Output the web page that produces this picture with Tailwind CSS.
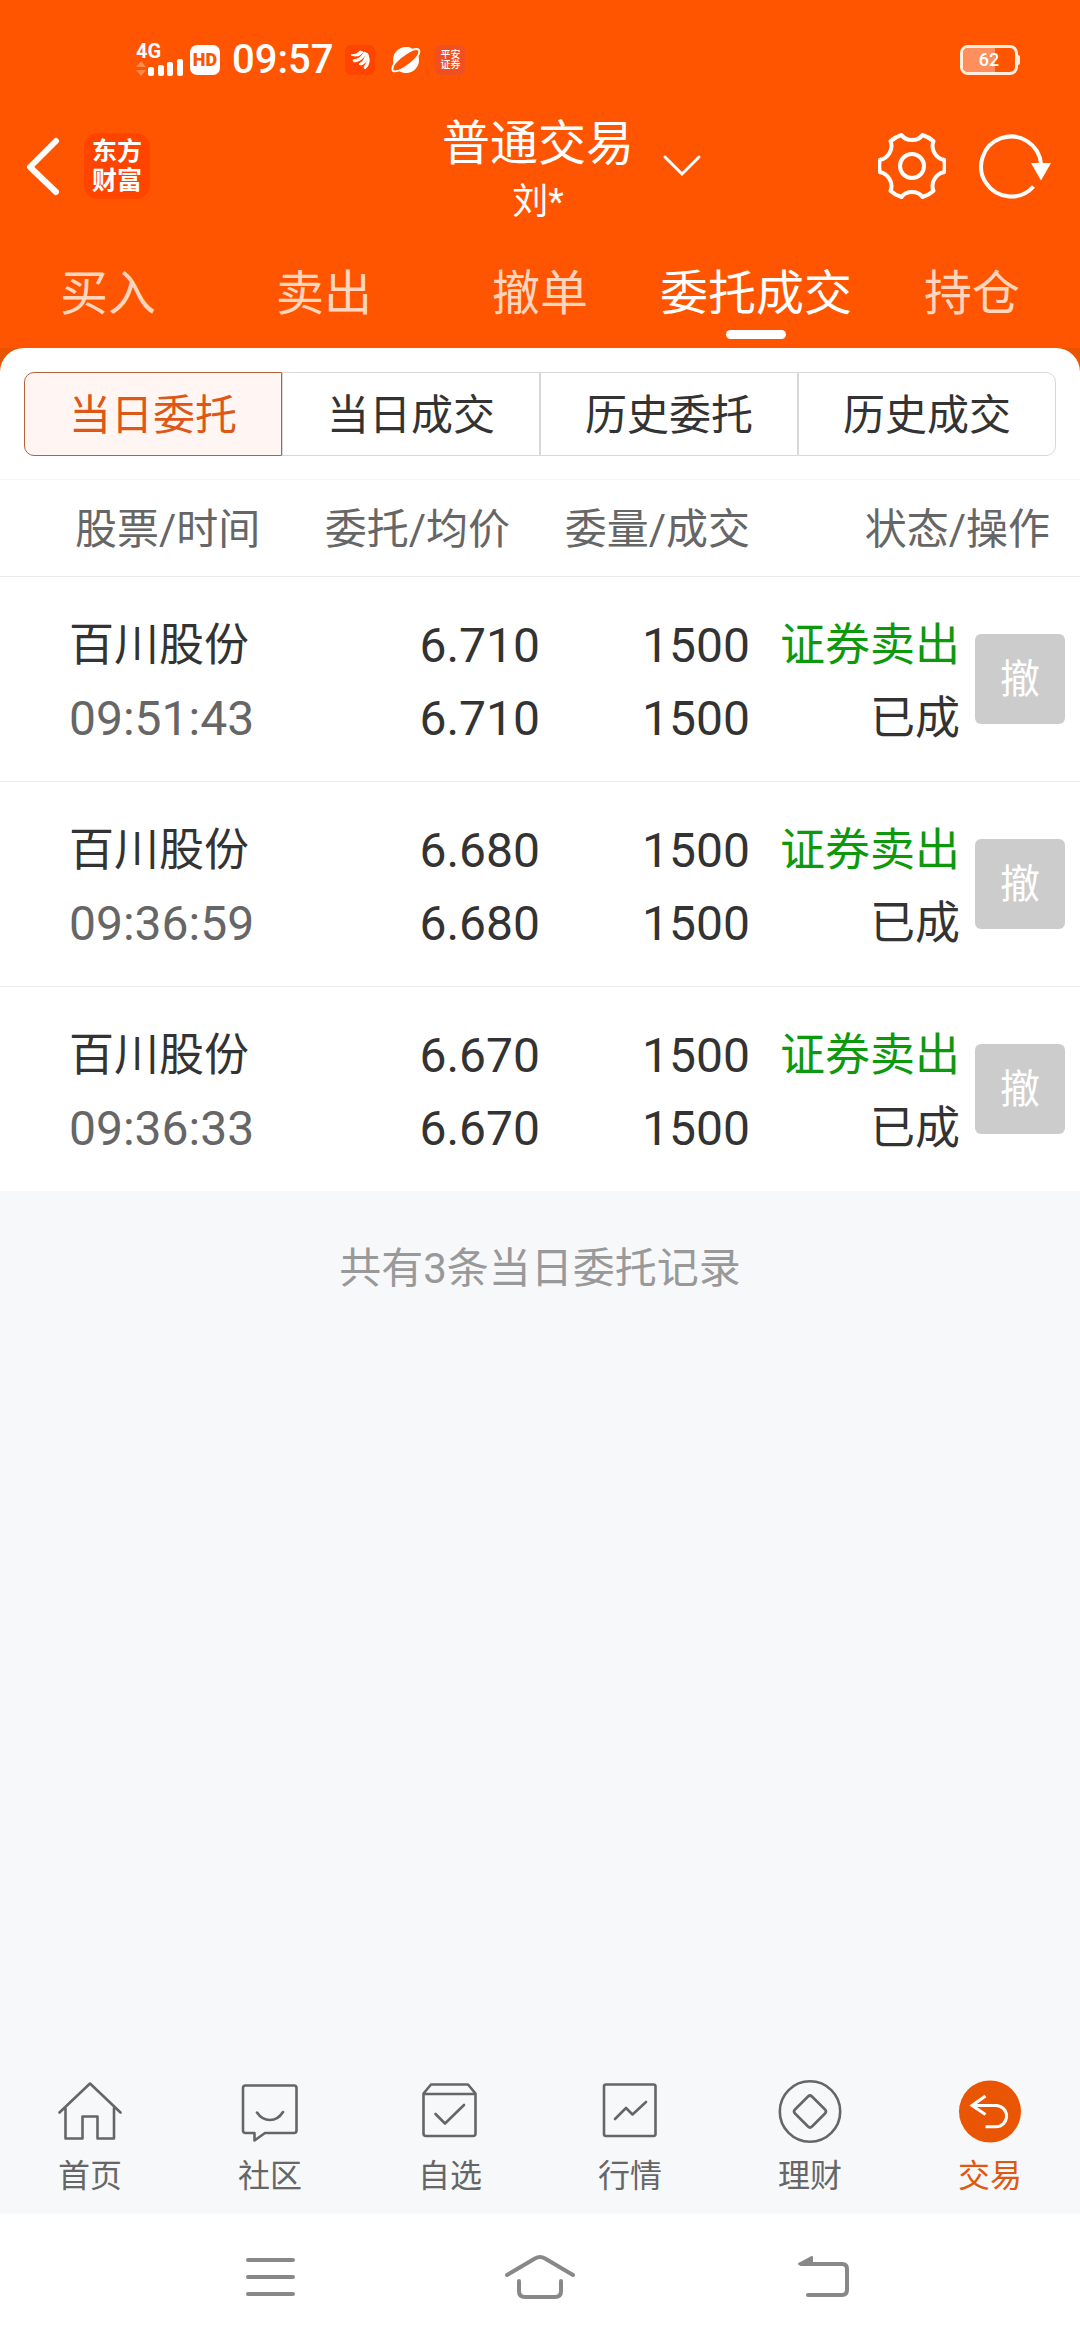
<!DOCTYPE html>
<html lang="zh-CN">
<head>
  <meta charset="UTF-8">
  <meta name="viewport" content="width=device-width, initial-scale=1.0">
  <title>普通交易</title>
  <script src="https://cdn.jsdelivr.net/npm/@tailwindcss/browser@4"></script>
</head>
<body class="min-h-screen flex flex-col bg-[#f7f8fa] text-[#333] font-[Roboto,'Noto_Sans_CJK_SC',sans-serif]">

  <header class="bg-[#ff5500] text-white">
    <!-- status bar -->
    <div class="h-[104px] pt-4 pl-[136px] pr-[60px] flex items-center justify-between">
      <div class="flex items-center">
        <div class="w-[47px] mr-[7px]">
          <p class="text-[20px] leading-[15px] font-bold">4G</p>
          <svg width="47" height="18" viewBox="0 0 47 18" fill="#fff">
            <path d="M0 8L5 2L10 8ZM0 11H10L5 17Z" fill="#ff8a4d" />
            <rect x="12" y="8" width="6" height="9" rx="2" />
            <rect x="22" y="6" width="6" height="11" rx="2" />
            <rect x="31" y="3" width="6" height="14" rx="2" />
            <rect x="41" y="0" width="6" height="17" rx="2" />
          </svg>
        </div>
        <span class="w-[30px] h-[30px] rounded-[7px] bg-white text-[#ff5500] text-[18px] leading-[30px] font-black text-center">HD</span>
        <span class="ml-3 text-[40px] leading-[40px] font-medium">09:57</span>
        <svg class="ml-3" width="30" height="30" viewBox="0 0 30 30">
          <rect width="30" height="30" rx="6" fill="#ff4400" />
          <path d="M6 10Q12 10 15 6L18 7Q14 13 6 10ZM8 15Q16 14 19 7L21 8Q18 16 9 17ZM14 19Q20 16 21 8L23 9Q23 18 16 20ZM19 22Q23 18 23 10L24 13Q25 20 20 24Z" fill="#fff" stroke="#fff" />
        </svg>
        <svg class="ml-4" width="30" height="30" viewBox="0 0 30 30">
          <circle cx="15" cy="15" r="13" fill="#fff" />
          <path d="M2 26Q-1 21 10 12Q24 1 28 5Q30 10 19 19Q7 28 2 26Z" fill="#ff5500" stroke="#fff" stroke-width="2" />
          <path d="M5 11Q8 2 16 2Q20 2 22 5Q14 8 5 17ZM26 12Q28 20 22 25Q16 30 9 26Q18 22 26 12Z" fill="#fff" />
        </svg>
        <span class="ml-[14px] w-[30px] h-[30px] pt-[5px] rounded-md bg-[#f04f22] text-[10px] leading-[10px] font-medium text-center">平安<br>证券</span>
      </div>
      <div class="flex items-center">
        <div class="relative w-[58px] h-[30px] rounded-lg border-[3px] border-[#ffeedd] overflow-hidden">
          <div class="w-[62%] h-full bg-[#ff8f5c]"></div>
          <span class="absolute inset-0 text-center text-[18px] leading-6 font-medium">62</span>
        </div>
        <div class="w-0.5 h-[10px] bg-[#ffeedd] rounded-r"></div>
      </div>
    </div>

    <!-- title bar -->
    <div class="grid grid-cols-[1fr_auto_1fr] items-center pl-6 pr-7">
      <div class="flex items-center gap-6">
        <button aria-label="返回">
          <svg width="36" height="60" viewBox="0 0 36 60" fill="none" stroke="#fff" stroke-width="6" stroke-linecap="round" stroke-linejoin="round">
            <path d="M32 5L6 31L32 56" />
          </svg>
        </button>
        <a href="#" class="w-[66px] h-[66px] pt-1 rounded-[14px] bg-[#ff4400] text-[25px] leading-[29px] font-bold text-center">东方<br>财富</a>
      </div>
      <div class="pt-2 text-center">
        <h1 class="text-[48px] leading-[64px]">普通交易</h1>
        <p class="text-[36px] leading-[52px]">刘*</p>
      </div>
      <div class="flex items-center">
        <button class="ml-7 mr-auto" aria-label="切换账户">
          <svg width="40" height="24" viewBox="0 0 40 24" fill="none" stroke="#fff" stroke-width="3" stroke-linecap="round">
            <path d="M3 3L20 20L37 3" />
          </svg>
        </button>
        <button aria-label="设置">
          <svg width="68" height="68" viewBox="0 0 68 68" fill="none" stroke="#fff" stroke-width="4" stroke-linejoin="round">
            <path d="M23.5 3Q27 8 34 8Q41 8 44.5 3Q51 5 55.5 9.3Q53 15 56.5 21Q60 27 66 27.8Q67.5 34 66 40.2Q60 41 56.5 47Q53 53 55.5 58.7Q51 63 44.5 65Q41 60 34 60Q27 60 23.5 65Q17 63 12.5 58.7Q15 53 11.5 47Q8 41 2 40.2Q.5 34 2 27.8Q8 27 11.5 21Q15 15 12.5 9.3Q17 5 23.5 3Z" />
            <circle cx="34" cy="34" r="12" />
          </svg>
        </button>
        <button class="ml-8" aria-label="刷新">
          <svg width="74" height="68" viewBox="0 0 74 68">
            <path d="M55.5 54.5A30 30 0 1 1 63 32" fill="none" stroke="#fff" stroke-width="4" />
            <path d="M53 31H73L63 48.5Z" fill="#fff" />
          </svg>
        </button>
      </div>
    </div>

    <!-- main tabs -->
    <nav class="grid grid-cols-5 pt-[30px] pb-[9px] text-[48px] leading-[72px] text-center whitespace-nowrap text-[#ffd5bd]">
      <a href="#">买入</a>
      <a href="#">卖出</a>
      <a href="#">撤单</a>
      <a href="#" class="flex flex-col items-center text-white">
        委托成交
        <span class="w-[60px] h-[9px] rounded-full bg-white"></span>
      </a>
      <a href="#">持仓</a>
    </nav>
  </header>

  <main class="grow">
    <div class="bg-linear-to-b from-[#e85500] from-50% to-white to-50%">
      <div class="rounded-t-3xl bg-white px-6 pt-6 pb-[23px] border-b border-[#f5f5f5]">
        <div class="grid grid-cols-4 text-[42px] leading-[78px]">
          <button class="pt-1 border border-[#b5623a] rounded-l-[10px] bg-[#fff6f3] text-[#dd5817]">当日委托</button>
          <button class="pt-1 border border-[#d8d8d8]">当日成交</button>
          <button class="pt-1 border border-[#d8d8d8]">历史委托</button>
          <button class="pt-1 border border-[#d8d8d8] rounded-r-[10px]">历史成交</button>
        </div>
      </div>
    </div>

    <table class="w-full table-fixed bg-white text-[45px] leading-[73px] text-right whitespace-nowrap">
      <colgroup>
        <col>
        <col>
        <col class="w-[210px]">
        <col class="w-[210px]">
        <col class="w-[120px]">
      </colgroup>
      <thead>
        <tr class="h-24 border-b border-[#ebebeb] text-[42px] text-[#666]">
          <th class="pl-[75px] pt-1 font-normal text-left">股票/时间</th>
          <th class="pr-[30px] pt-1 font-normal">委托/均价</th>
          <th class="pt-1 font-normal">委量/成交</th>
          <th class="pr-[30px] pt-1 font-normal" colspan="2">状态/操作</th>
        </tr>
      </thead>
      <tbody>
        <tr class="border-b border-[#ebebeb]">
          <td class="pl-[69px] pt-8 pb-[26px] text-left">百川股份<p class="text-[48px] text-[#666]">09:51:43</p></td>
          <td class="pt-8 pb-[26px] text-[48px]">6.710<br>6.710</td>
          <td class="pt-8 pb-[26px] text-[48px]">1500<br>1500</td>
          <td class="pt-8 pb-[26px]"><p class="text-[#0c990c]">证券卖出</p>已成</td>
          <td class="pr-[15px]"><button class="w-[90px] h-[90px] pt-0.5 rounded-md bg-[#ccc] text-white text-[40px] leading-[88px] text-center align-middle">撤</button></td>
        </tr>
        <tr class="border-b border-[#ebebeb]">
          <td class="pl-[69px] pt-8 pb-[26px] text-left">百川股份<p class="text-[48px] text-[#666]">09:36:59</p></td>
          <td class="pt-8 pb-[26px] text-[48px]">6.680<br>6.680</td>
          <td class="pt-8 pb-[26px] text-[48px]">1500<br>1500</td>
          <td class="pt-8 pb-[26px]"><p class="text-[#0c990c]">证券卖出</p>已成</td>
          <td class="pr-[15px]"><button class="w-[90px] h-[90px] pt-0.5 rounded-md bg-[#ccc] text-white text-[40px] leading-[88px] text-center align-middle">撤</button></td>
        </tr>
        <tr>
          <td class="pl-[69px] pt-8 pb-[26px] text-left">百川股份<p class="text-[48px] text-[#666]">09:36:33</p></td>
          <td class="pt-8 pb-[26px] text-[48px]">6.670<br>6.670</td>
          <td class="pt-8 pb-[26px] text-[48px]">1500<br>1500</td>
          <td class="pt-8 pb-[26px]"><p class="text-[#0c990c]">证券卖出</p>已成</td>
          <td class="pr-[15px]"><button class="w-[90px] h-[90px] pt-0.5 rounded-md bg-[#ccc] text-white text-[40px] leading-[88px] text-center align-middle">撤</button></td>
        </tr>
      </tbody>
    </table>

    <p class="pt-12 text-[42px] leading-[60px] text-center text-[#999]">共有3条当日委托记录</p>
  </main>

  <!-- bottom nav -->
  <nav class="grid grid-cols-6 pb-[14px] text-[32px] leading-[48px] text-center text-[#666]">
    <a href="#" class="flex flex-col items-center gap-2">
      <svg width="64" height="64" viewBox="0 0 64 64" fill="none" stroke="currentColor" stroke-width="2.6" stroke-linejoin="round" stroke-linecap="round">
        <path d="M1.5 32.5L32 3.5L62.5 32.5M7.5 28V58.5H24.5V36.5H39.5V58.5H56V28" />
      </svg>
      首页
    </a>
    <a href="#" class="flex flex-col items-center gap-2">
      <svg width="64" height="64" viewBox="0 0 64 64" fill="none" stroke="currentColor" stroke-width="2.6" stroke-linejoin="round" stroke-linecap="round">
        <path d="M7.5 5.5H56Q58.5 5.5 58.5 8V50.5Q58.5 53 56 53H27L16.5 60.5V53H7.5Q5 53 5 50.5V8Q5 5.5 7.5 5.5ZM19 32.5Q24 40 32 40Q40 40 45 32" />
      </svg>
      社区
    </a>
    <a href="#" class="flex flex-col items-center gap-2">
      <svg width="64" height="64" viewBox="0 0 64 64" fill="none" stroke="currentColor" stroke-width="2.6" stroke-linejoin="round" stroke-linecap="round">
        <path d="M5.5 14V53.5Q5.5 56 8 56H55Q57.5 56 57.5 53.5V14ZM5.5 13.5L13 4.5H50L57.5 13.5M17.5 34L27 43.5L46 25" />
      </svg>
      自选
    </a>
    <a href="#" class="flex flex-col items-center gap-2">
      <svg width="64" height="64" viewBox="0 0 64 64" fill="none" stroke="currentColor" stroke-width="2.6" stroke-linejoin="round" stroke-linecap="round">
        <rect x="6" y="4.5" width="51.5" height="51.5" rx="2" />
        <path d="M17 39L28 28L34.5 34.5L48 22" />
      </svg>
      行情
    </a>
    <a href="#" class="flex flex-col items-center gap-2">
      <svg width="64" height="64" viewBox="0 0 64 64" fill="none" stroke="currentColor" stroke-width="2.6" stroke-linejoin="round">
        <circle cx="32" cy="31.5" r="30.2" />
        <path d="M30 16.5Q32 14.5 34 16.5L47 29.5Q49 31.5 47 33.5L34 46.5Q32 48.5 30 46.5L17 33.5Q15 31.5 17 29.5Z" />
      </svg>
      理财
    </a>
    <a href="#" class="flex flex-col items-center gap-2 text-[#e2570f]">
      <svg width="64" height="64" viewBox="0 0 64 64" fill="none" stroke="#fff" stroke-width="3">
        <circle cx="32" cy="31.5" r="31" fill="#ea5504" stroke="none" />
        <path d="M27.5 16L14 25.5L27.5 34.5M14 25.5H38A10.6 10.6 0 0 1 38 46.7H27.5" />
      </svg>
      交易
    </a>
  </nav>

  <!-- system keys -->
  <div class="grid grid-cols-3 items-center justify-items-center h-[126px] px-[12.5%] bg-white">
    <button aria-label="最近任务">
      <svg width="50" height="44" viewBox="0 0 50 44" stroke="#888" stroke-width="4" stroke-linecap="round">
        <path d="M3 5H48M3 22H48M3 39H48" />
      </svg>
    </button>
    <button aria-label="主屏幕">
      <svg width="72" height="46" viewBox="0 0 72 46" fill="none" stroke="#888" stroke-width="4" stroke-linecap="round">
        <path d="M3 21L31 4.5Q36 1.5 41 4.5L69 21M15 27V37Q15 43 21 43H51Q57 43 57 37V27" />
      </svg>
    </button>
    <button aria-label="返回上一级">
      <svg width="80" height="46" viewBox="0 0 80 46" fill="none" stroke="#888" stroke-width="4" stroke-linecap="round">
        <path d="M31 10H72Q77 10 77 15V36Q77 41 72 41H38" />
        <path d="M29 10L42 3V10Z" fill="#888" stroke-width="2" stroke-linejoin="round" />
      </svg>
    </button>
  </div>
</body>
</html>
